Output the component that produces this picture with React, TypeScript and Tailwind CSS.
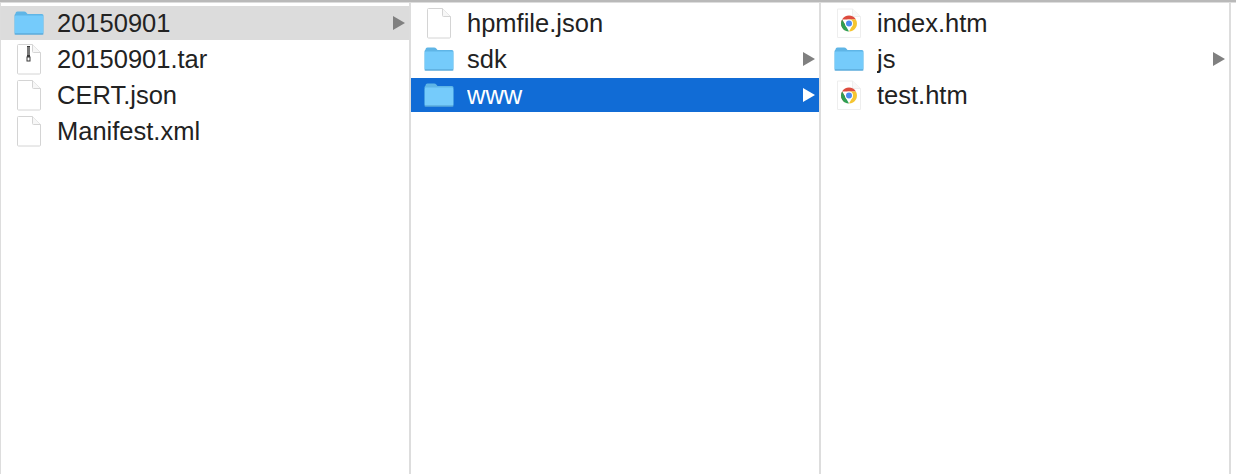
import React from 'react';

type Kind = 'folder' | 'file' | 'tar' | 'chrome';
type Entry = { name: string; kind: Kind; arrow?: boolean; selected?: 'gray' | 'blue' };

const columns: Entry[][] = [
  [
    { name: '20150901', kind: 'folder', arrow: true, selected: 'gray' },
    { name: '20150901.tar', kind: 'tar' },
    { name: 'CERT.json', kind: 'file' },
    { name: 'Manifest.xml', kind: 'file' },
  ],
  [
    { name: 'hpmfile.json', kind: 'file' },
    { name: 'sdk', kind: 'folder', arrow: true },
    { name: 'www', kind: 'folder', arrow: true, selected: 'blue' },
  ],
  [
    { name: 'index.htm', kind: 'chrome' },
    { name: 'js', kind: 'folder', arrow: true },
    { name: 'test.htm', kind: 'chrome' },
  ],
];

function FolderIcon() {
  return (
    <svg width="30" height="24" viewBox="0 0 30 24">
      <path d="M1.5 2.5 Q1.5 0.5 3.5 0.5 H10 Q11.5 0.5 12.5 1.8 L13.5 3 H28 Q29.5 3 29.5 4.5 V22 Q29.5 23.5 28 23.5 H2 Q0.5 23.5 0.5 22 V4 Z" fill="#5fb5e6" />
      <path d="M0.8 6 Q0.8 4.6 2.2 4.6 H27.8 Q29.2 4.6 29.2 6 V21.6 Q29.2 22.6 28 22.6 H2 Q0.8 22.6 0.8 21.6 Z" fill="#75cbfb" />
      <rect x="0.6" y="22.4" width="28.8" height="1.1" rx="0.5" fill="#5aa6d6" />
    </svg>
  );
}

function PageShape() {
  return (
    <>
      <path d="M0.5 1.5 Q0.5 0.5 1.5 0.5 H15.5 L23.5 8.5 V29 Q23.5 30 22.5 30 H1.5 Q0.5 30 0.5 29 Z" fill="#ffffff" stroke="#d4d4d4" strokeWidth="1" />
      <path d="M15.5 0.5 V7.5 Q15.5 8.5 16.5 8.5 H23.5" fill="#f7f7f7" stroke="#d4d4d4" strokeWidth="1" />
    </>
  );
}

function FileIcon({ zip }: { zip?: boolean }) {
  return (
    <svg width="24" height="31" viewBox="0 0 24 31">
      <PageShape />
      {zip && (
        <>
          <rect x="10" y="2" width="3" height="11" fill="#3a3a3a" />
          <rect x="10" y="13" width="3" height="4" fill="none" stroke="#3a3a3a" strokeWidth="1" />
          <path d="M10 4h3M10 6h3M10 8h3M10 10h3" stroke="#d8d8d8" strokeWidth="0.8" />
        </>
      )}
    </svg>
  );
}

function ChromeIcon() {
  return (
    <svg width="24" height="31" viewBox="0 0 24 31">
      <path d="M0.5 1 H15.5 L23.5 8.5 V29.5 H0.5 Z" fill="#ffffff" stroke="#eeeeee" strokeWidth="1" />
      <path d="M15.5 1 V8.5 H23.5" fill="#f8f8f8" stroke="#eeeeee" strokeWidth="1" />
      <g transform="translate(12 15.5)">
        <path d="M-6.9 -4 A8 8 0 0 1 6.9 -4 L0 -4 Z" fill="#dd4b3e" />
        <path d="M-6.9 -4 L-3.4 2 L-4 7 A8 8 0 0 1 -6.9 -4 Z" fill="#dd4b3e" />
        <path d="M-6.9 -4 L-3.4 2 L0 8 A8 8 0 0 1 -6.9 -4 Z" fill="#2f9e52" />
        <path d="M6.9 -4 A8 8 0 0 1 0 8 L3.4 2 L0 -4 Z" fill="#f5c531" />
        <circle r="4" fill="#ffffff" />
        <circle r="3" fill="#4c8bf0" />
      </g>
    </svg>
  );
}

function Row({ entry }: { entry: Entry }) {
  const { name, kind, arrow, selected } = entry;
  const bg = selected === 'blue' ? 'bg-[#116cd6] text-white' : selected === 'gray' ? 'bg-[#dcdcdc] text-[#222222]' : 'text-[#222222]';
  return (
    <div className={`h-[34px] flex items-center pr-1 ${bg}`}>
      <div className="w-[56px] shrink-0 pl-[13px] flex">
        {kind === 'folder' ? (
          <FolderIcon />
        ) : (
          <div className="ml-[3px]">
            {kind === 'chrome' ? <ChromeIcon /> : <FileIcon zip={kind === 'tar'} />}
          </div>
        )}
      </div>
      <span className="flex-1 truncate text-[25.5px] leading-[34px]">{name}</span>
      {arrow && (
        <svg width="12" height="14" viewBox="0 0 12 14">
          <path d="M0 0 L12 7 L0 14 Z" fill={selected === 'blue' ? '#ffffff' : '#808080'} />
        </svg>
      )}
    </div>
  );
}

export default function App() {
  return (
    <div className="w-[1236px] h-[474px] overflow-hidden bg-white font-['Liberation_Sans',Arial,sans-serif] flex flex-col">
      <div className="h-[3px] shrink-0 bg-[#b9b9b9] border-b border-[#dddddd]" />
      <div className="flex flex-1">
        <div className="w-[411px] border-l border-r-2 border-[#dddddd] pt-[3px] flex flex-col gap-[2px]">
          {columns[0].map(e => <Row key={e.name} entry={e} />)}
        </div>
        <div className="w-[410px] border-r-2 border-[#dddddd] pt-[3px] flex flex-col gap-[2px]">
          {columns[1].map(e => <Row key={e.name} entry={e} />)}
        </div>
        <div className="w-[410px] border-r-2 border-[#dddddd] pt-[3px] flex flex-col gap-[2px]">
          {columns[2].map(e => <Row key={e.name} entry={e} />)}
        </div>
      </div>
    </div>
  );
}
